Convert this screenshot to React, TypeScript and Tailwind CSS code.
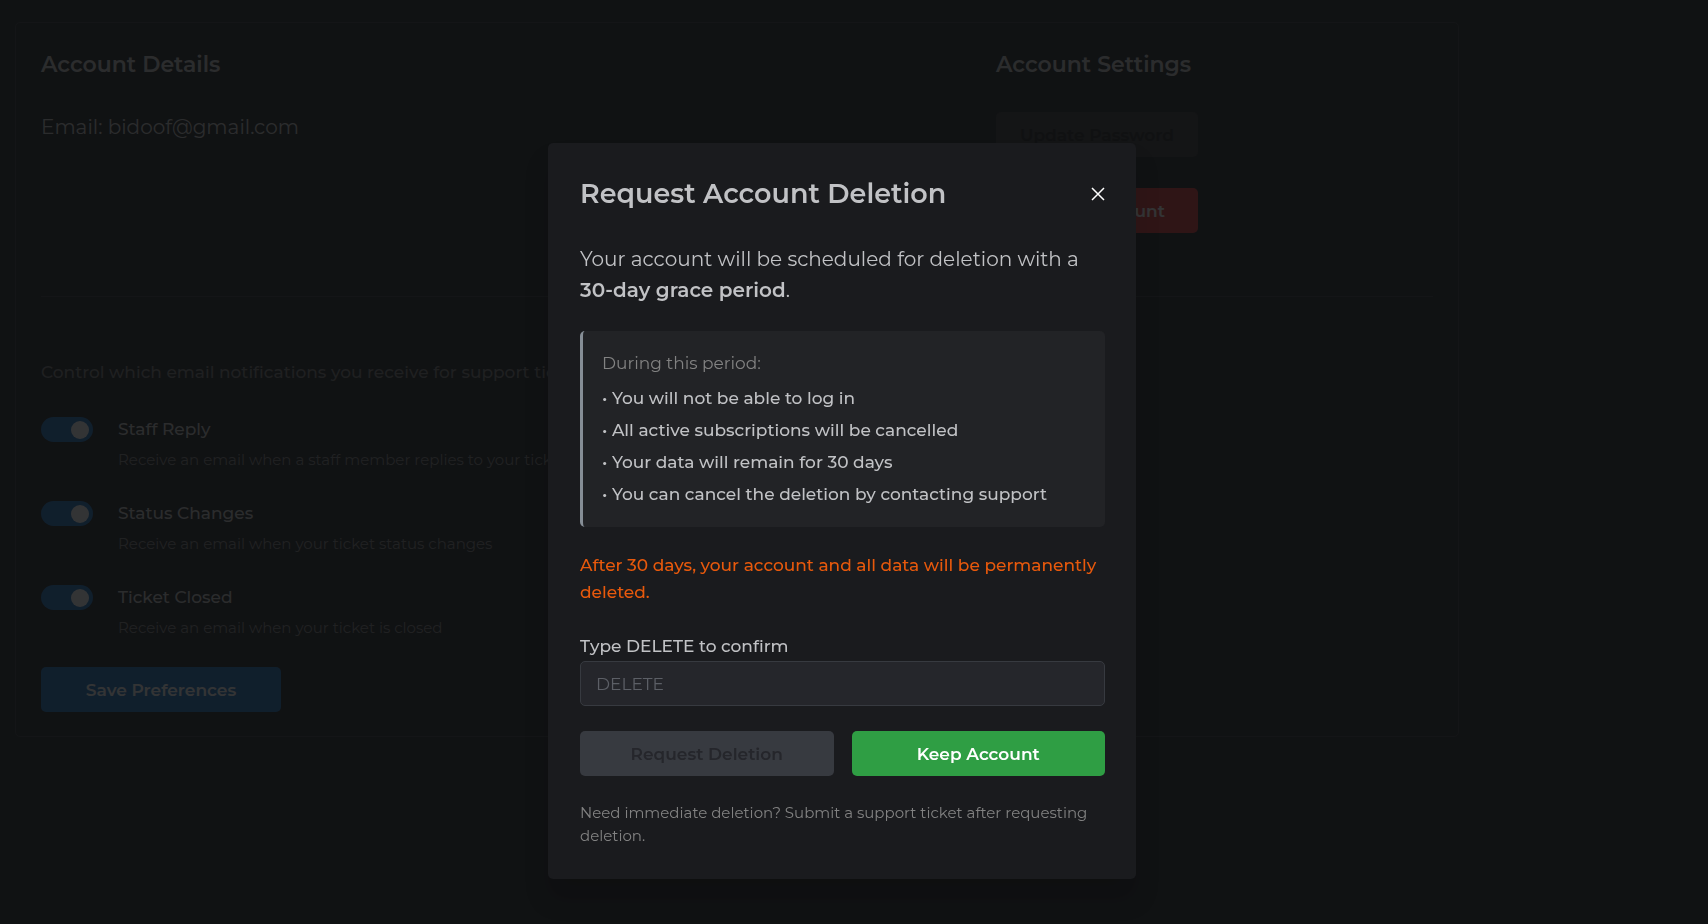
import { useState } from "react"

interface INotification {
    id: string
    label: string
    description: string
}

const notifications: INotification[] = [
    { id: "staff-reply", label: "Staff Reply", description: "Receive an email when a staff member replies to your ticket" },
    { id: "status-changes", label: "Status Changes", description: "Receive an email when your ticket status changes" },
    { id: "ticket-closed", label: "Ticket Closed", description: "Receive an email when your ticket is closed" },
]

const consequences = [
    "You will not be able to log in",
    "All active subscriptions will be cancelled",
    "Your data will remain for 30 days",
    "You can cancel the deletion by contacting support",
]

const button = "h-[45px] rounded-[5px] pt-0.5 text-[17px] font-semibold"

const NotificationItem = ({ id, label, description }: INotification) => {
    const [checked, setChecked] = useState(true)

    return (
        <div className="flex gap-[25px]">
            <input
                id={id}
                type="checkbox"
                role="switch"
                checked={checked}
                onChange={(e) => setChecked(e.target.checked)}
                className="relative h-[25px] w-[52px] shrink-0 cursor-pointer appearance-none rounded-full bg-[#373a40] before:absolute before:left-1 before:top-1 before:size-[18px] before:rounded-full before:bg-white checked:bg-[#1971c2] checked:before:left-[30px]"
            />
            <div>
                <label htmlFor={id} className="block text-[17px] font-medium leading-[25px]">{label}</label>
                <p className="mt-1.5 text-[15px] leading-[23px] text-[#828282]">{description}</p>
            </div>
        </div>
    )
}

const AccountPage = () => (
    <main className="min-h-screen bg-[#1a1b1e] px-[15px] pt-[22px] text-[#c9c9c9]">
        <section className="w-full max-w-[1444px] rounded-[5px] border border-[#303237] p-[25px] pb-6">
            <div className="grid min-h-[249px] grid-cols-[1fr_437px] border-b border-[#303237]">
                <div>
                    <h2 className="text-[22px] font-semibold leading-[33px]">Account Details</h2>
                    <p className="mt-[31px] text-[20px] leading-[31px]">Email: bidoof@gmail.com</p>
                </div>
                <div>
                    <h2 className="text-[22px] font-semibold leading-[33px]">Account Settings</h2>
                    <div className="mt-[31px] flex w-[202px] flex-col gap-[31px]">
                        <button disabled className={`bg-[#2e2e2e] text-[#141414] ${button}`}>Update Password</button>
                        <button className={`bg-[#e03131] text-white ${button}`}>Delete Account</button>
                    </div>
                </div>
            </div>
            <p className="mt-[61px] text-[17px] font-medium leading-[28px] text-[#787878]">
                Control which email notifications you receive for support tickets.
            </p>
            <div className="mt-[31px] flex flex-col gap-[30px]">
                {notifications.map((item) => (
                    <NotificationItem key={item.id} {...item} />
                ))}
            </div>
            <button className={`mt-[28px] w-60 bg-[#1971c2] text-white ${button}`}>Save Preferences</button>
        </section>
    </main>
)

const DeletionModal = () => {
    const [value, setValue] = useState("")

    return (
        <div className="fixed inset-0 flex items-start justify-center overflow-y-auto bg-[#0f1012]/85 pr-6 pt-[143px]">
            <div
                role="dialog"
                aria-labelledby="modal-title"
                className="w-full max-w-[588px] rounded-[5px] bg-[#1a1b1e] py-8 pl-8 pr-[31px] text-[#c1c2c5] shadow-[0_20px_25px_rgba(0,0,0,0.15)]"
            >
                <div className="flex h-[38px] items-center justify-between">
                    <h1 id="modal-title" className="text-[27px] font-semibold leading-[38px]">Request Account Deletion</h1>
                    <button aria-label="Close" className="cursor-pointer text-white">
                        <svg width="14" height="14" viewBox="0 0 14 14" fill="none" stroke="currentColor" strokeWidth="1.5">
                            <path d="M1 1L13 13M13 1L1 13" />
                        </svg>
                    </button>
                </div>
                <p className="mt-[31px] text-[20px] leading-[31px]">
                    Your account will be scheduled for deletion with a <strong className="font-semibold">30-day grace period</strong>.
                </p>
                <div className="mt-[25px] rounded-[5px] border-l-[3px] border-[#868e96] bg-[#222326] px-[19px] pb-[17px] pt-[18px] text-[17px]">
                    <p className="leading-7 text-[#828282]">During this period:</p>
                    <ul className="mt-[5px] font-medium leading-8">
                        {consequences.map((text) => (
                            <li key={text}>• {text}</li>
                        ))}
                    </ul>
                </div>
                <p className="mt-[25px] text-[17px] font-medium leading-[27px] text-[#e8590c]">
                    After 30 days, your account and all data will be permanently deleted.
                </p>
                <label htmlFor="confirm" className="mb-px mt-[26px] block text-[17px] font-medium leading-7">Type DELETE to confirm</label>
                <input
                    id="confirm"
                    type="text"
                    placeholder="DELETE"
                    value={value}
                    onChange={(e) => setValue(e.target.value)}
                    className="block h-[45px] w-full rounded-[5px] border border-[#373a40] bg-[#25262b] px-[15px] text-[17px] outline-none placeholder:text-[#5c5f66]"
                />
                <div className="mt-[25px] grid grid-cols-2 gap-[18px]">
                    <button
                        disabled={value !== "DELETE"}
                        className={`bg-[#e03131] text-white disabled:bg-[#373a40] disabled:text-[#25262b] ${button}`}
                    >
                        Request Deletion
                    </button>
                    <button className={`bg-[#2f9e44] text-white ${button}`}>Keep Account</button>
                </div>
                <p className="mt-[25px] text-[15px] leading-[23px] text-[#828282]">
                    Need immediate deletion? Submit a support ticket after requesting deletion.
                </p>
            </div>
        </div>
    )
}

const App = () => (
    <div className="font-[Montserrat,Inter,sans-serif]">
        <AccountPage />
        <DeletionModal />
    </div>
)

export default App
